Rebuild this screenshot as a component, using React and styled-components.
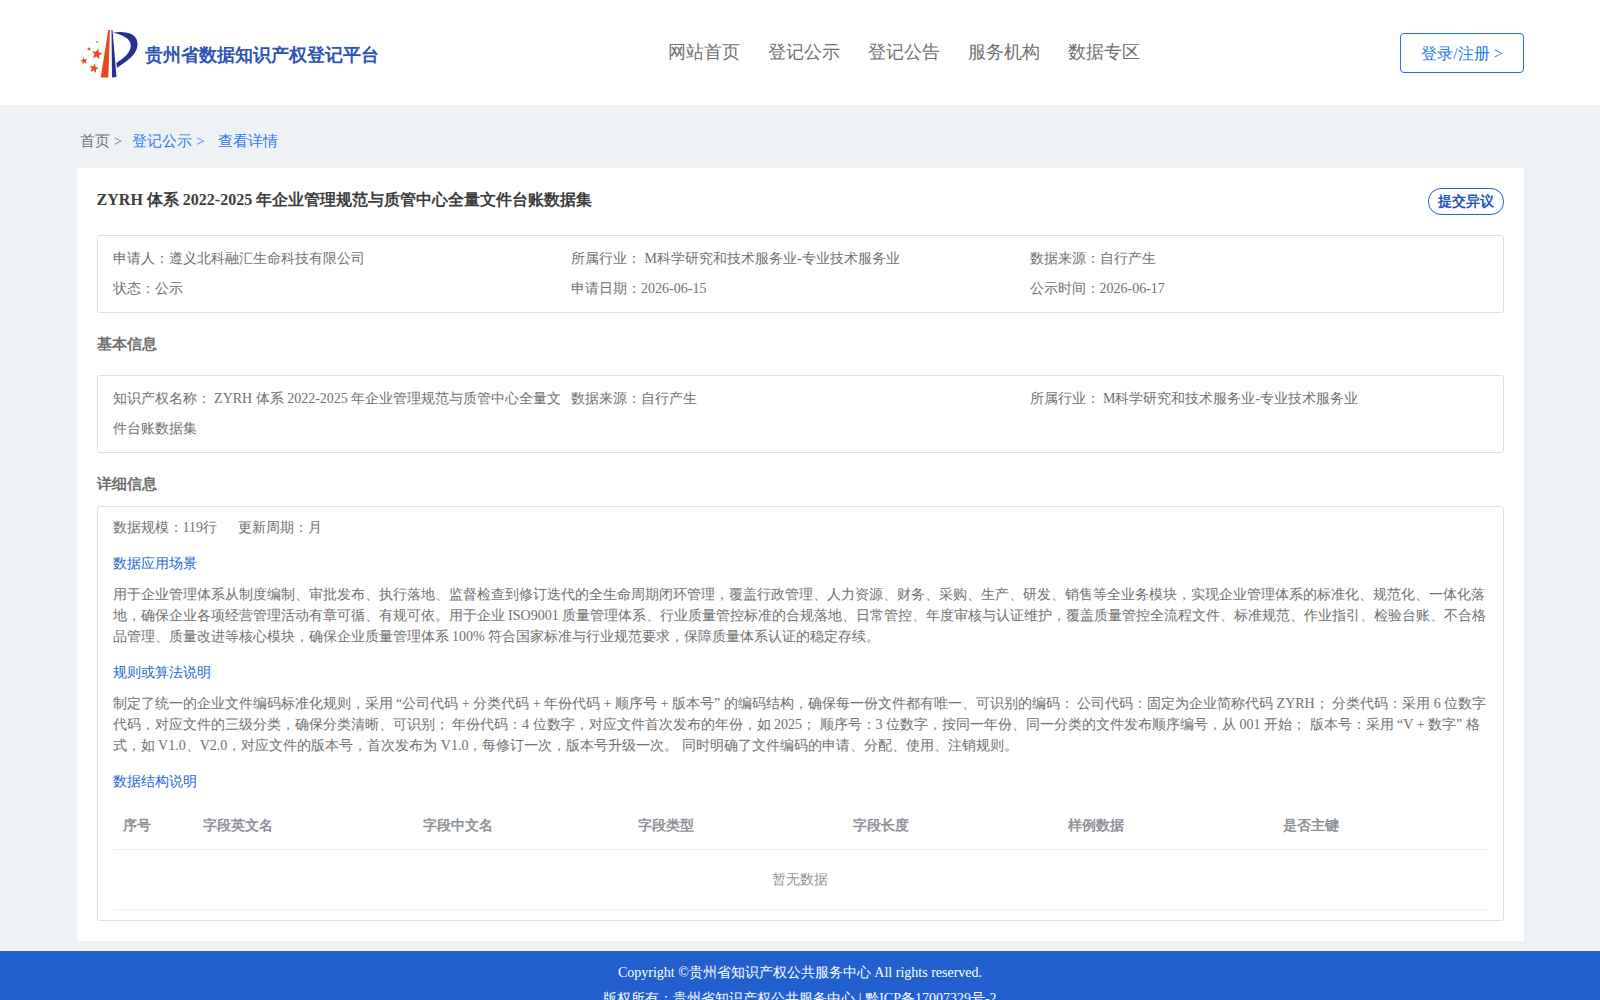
import React from "react";
import styled, { createGlobalStyle } from "styled-components";

const Global = createGlobalStyle`
  html, body { margin: 0; padding: 0; background: #eff2f5; }
  body { font-family: "Liberation Serif", serif; color: #707070; }
  * { box-sizing: border-box; }
`;

const Header = styled.header`
  height: 105px;
  background: #fff;
  padding: 0 76px 0 80px;
  display: grid;
  grid-template-columns: 588px auto 1fr;
  align-items: center;
`;
const Brand = styled.div`
  display: flex;
  align-items: center;
  gap: 7px;
  padding-top: 2px;
`;
const BrandName = styled.span`
  font-size: 18px;
  font-weight: 700;
  color: #2f52b8;
  padding-top: 2px;
`;
const Nav = styled.nav`
  display: flex;
  gap: 28px;
  font-size: 18px;
  color: #707070;
  margin-top: -2px;
`;
const LoginWrap = styled.div`
  display: flex;
  justify-content: flex-end;
`;
const LoginButton = styled.button`
  width: 124px;
  height: 40px;
  padding: 3px 0 0;
  font: inherit;
  font-size: 16px;
  color: #2a78ee;
  background: #fff;
  border: 1px solid #1f6fe5;
  border-radius: 4px;
`;
const Crumbs = styled.div`
  height: 63px;
  padding: 26px 80px 0;
  font-size: 15px;
  line-height: 20px;
  display: flex;
  color: #707070;
`;
const CrumbLink = styled.span`
  color: #2a78ee;
  margin-left: ${(p) => p.$gap}px;
`;
const Panel = styled.main`
  margin: 0 76px 0 76.6px;
  background: #fff;
  padding: 20px;
`;
const TitleRow = styled.div`
  display: flex;
  justify-content: space-between;
  align-items: flex-start;
  height: 27px;
`;
const Title = styled.h1`
  margin: 0;
  font-size: 16px;
  line-height: 24px;
  font-weight: 700;
  color: #3d3d3d;
`;
const Objection = styled.button`
  height: 27px;
  width: 76px;
  padding: 0;
  font: inherit;
  font-size: 14px;
  font-weight: 700;
  color: #1d55b8;
  background: #fff;
  border: 1px solid #1d61cf;
  border-radius: 13px;
`;
const InfoBox = styled.section`
  margin-top: ${(p) => p.$top}px;
  border: 1px solid #dcdfe6;
  border-radius: 3px;
  padding: 8px 15px;
  display: grid;
  grid-template-columns: repeat(3, 1fr);
  font-size: 14px;
  line-height: 30px;
`;
const Info = styled.div`
  padding-right: 5px;
`;
const SectionTitle = styled.h2`
  margin: 19px 0 0;
  font-size: 15px;
  line-height: 24px;
  font-weight: 700;
  color: #6e6e6e;
`;
const DetailBox = styled.section`
  margin-top: 10px;
  border: 1px solid #dcdfe6;
  border-radius: 3px;
  padding: 10px 15px;
  font-size: 14px;
`;
const Scale = styled.div`
  display: flex;
  gap: 21px;
  line-height: 21px;
`;
const SubHead = styled.h3`
  margin: 15px 0 0;
  font-size: 14px;
  line-height: 21px;
  font-weight: 400;
  color: #2468d4;
`;
const Para = styled.p`
  margin: 10px 0 0;
  line-height: 21px;
`;
const Table = styled.table`
  width: 100%;
  margin-top: 10px;
  border-collapse: collapse;
  table-layout: fixed;
  font-size: 14px;
`;
const Th = styled.th`
  width: ${(p) => p.$w}px;
  height: 47px;
  padding: 2px 10px 0;
  text-align: left;
  font-weight: 700;
  color: #909399;
  border-bottom: 1px solid #ebeef5;
`;
const Empty = styled.td`
  height: 60px;
  padding: 2px 0 0;
  text-align: center;
  color: #909399;
  border-bottom: 1px solid #ebeef5;
`;
const Footer = styled.footer`
  margin-top: 10px;
  background: #2260cf;
  color: #fff;
  font-size: 14px;
  line-height: 26px;
  text-align: center;
  padding: 9px 0 8px;
`;

const Star = ({ x, y, r, rot = 0 }) => {
  const pts = [];
  for (let i = 0; i < 10; i++) {
    const a = (Math.PI / 5) * i - Math.PI / 2 + rot;
    const q = i % 2 ? r * 0.42 : r;
    pts.push(`${(x + q * Math.cos(a)).toFixed(2)},${(y + q * Math.sin(a)).toFixed(2)}`);
  }
  return <polygon points={pts.join(" ")} fill="#e8481c" />;
};

const Logo = () => (
  <svg width="58" height="52" viewBox="80 27 58 52" aria-hidden="true">
    <Star x={97} y={53} r={5.8} rot={0.2} />
    <Star x={84} y={60} r={3.8} rot={-0.2} />
    <Star x={94} y={67.5} r={5} rot={0.2} />
    <circle cx={89} cy={48} r={1.6} fill="#ea6a44" />
    <circle cx={97} cy={41} r={1.1} fill="#ea8a6c" />
    <polygon points="108.3,29 110,29 108.3,76.5 100.7,76.5" fill="#e8481c" />
    <polygon points="111.5,29 112.5,29 116.5,76 112,76.5" fill="#27308f" />
    <path
      d="M113 31.5 C126 29.5 137.5 32.5 137.5 43 C137.5 54 126 60.5 117 67 L116.4 62 C123 57.5 130.8 52 130.8 44.5 C130.8 37 122 34 113 31.5 Z"
      fill="#27308f"
    />
  </svg>
);

const heads = [
  ["序号", 80],
  ["字段英文名", 220],
  ["字段中文名", 215],
  ["字段类型", 215],
  ["字段长度", 215],
  ["样例数据", 215],
  ["是否主键", 215],
];

export default function App() {
  return (
    <>
      <Global />
      <Header>
        <Brand>
          <Logo />
          <BrandName>贵州省数据知识产权登记平台</BrandName>
        </Brand>
        <Nav>
          <span>网站首页</span>
          <span>登记公示</span>
          <span>登记公告</span>
          <span>服务机构</span>
          <span>数据专区</span>
        </Nav>
        <LoginWrap>
          <LoginButton>登录/注册 &gt;</LoginButton>
        </LoginWrap>
      </Header>
      <Crumbs>
        <span>首页 &gt;</span>
        <CrumbLink $gap={10}>登记公示 &gt;</CrumbLink>
        <CrumbLink $gap={14}>查看详情</CrumbLink>
      </Crumbs>
      <Panel>
        <TitleRow>
          <Title>ZYRH 体系 2022-2025 年企业管理规范与质管中心全量文件台账数据集</Title>
          <Objection>提交异议</Objection>
        </TitleRow>
        <InfoBox $top={20}>
          <Info>申请人：遵义北科融汇生命科技有限公司</Info>
          <Info>所属行业： M科学研究和技术服务业-专业技术服务业</Info>
          <Info>数据来源：自行产生</Info>
          <Info>状态：公示</Info>
          <Info>申请日期：2026-06-15</Info>
          <Info>公示时间：2026-06-17</Info>
        </InfoBox>
        <SectionTitle>基本信息</SectionTitle>
        <InfoBox $top={19}>
          <Info>知识产权名称： ZYRH 体系 2022-2025 年企业管理规范与质管中心全量文件台账数据集</Info>
          <Info>数据来源：自行产生</Info>
          <Info>所属行业： M科学研究和技术服务业-专业技术服务业</Info>
        </InfoBox>
        <SectionTitle>详细信息</SectionTitle>
        <DetailBox>
          <Scale>
            <span>数据规模：119行</span>
            <span>更新周期：月</span>
          </Scale>
          <SubHead>数据应用场景</SubHead>
          <Para>
            用于企业管理体系从制度编制、审批发布、执行落地、监督检查到修订迭代的全生命周期闭环管理，覆盖行政管理、人力资源、财务、采购、生产、研发、销售等全业务模块，实现企业管理体系的标准化、规范化、一体化落地，确保企业各项经营管理活动有章可循、有规可依。用于企业 ISO9001 质量管理体系、行业质量管控标准的合规落地、日常管控、年度审核与认证维护，覆盖质量管控全流程文件、标准规范、作业指引、检验台账、不合格品管理、质量改进等核心模块，确保企业质量管理体系 100% 符合国家标准与行业规范要求，保障质量体系认证的稳定存续。
          </Para>
          <SubHead>规则或算法说明</SubHead>
          <Para>
            制定了统一的企业文件编码标准化规则，采用 “公司代码 + 分类代码 + 年份代码 + 顺序号 + 版本号” 的编码结构，确保每一份文件都有唯一、可识别的编码： 公司代码：固定为企业简称代码 ZYRH； 分类代码：采用 6 位数字代码，对应文件的三级分类，确保分类清晰、可识别； 年份代码：4 位数字，对应文件首次发布的年份，如 2025； 顺序号：3 位数字，按同一年份、同一分类的文件发布顺序编号，从 001 开始； 版本号：采用 “V + 数字” 格式，如 V1.0、V2.0，对应文件的版本号，首次发布为 V1.0，每修订一次，版本号升级一次。 同时明确了文件编码的申请、分配、使用、注销规则。
          </Para>
          <SubHead>数据结构说明</SubHead>
          <Table>
            <thead>
              <tr>
                {heads.map(([h, w]) => (
                  <Th key={h} $w={w}>{h}</Th>
                ))}
              </tr>
            </thead>
            <tbody>
              <tr>
                <Empty colSpan={7}>暂无数据</Empty>
              </tr>
            </tbody>
          </Table>
        </DetailBox>
      </Panel>
      <Footer>
        <div>Copyright ©贵州省知识产权公共服务中心 All rights reserved.</div>
        <div>版权所有：贵州省知识产权公共服务中心 | 黔ICP备17007329号-2</div>
      </Footer>
    </>
  );
}
